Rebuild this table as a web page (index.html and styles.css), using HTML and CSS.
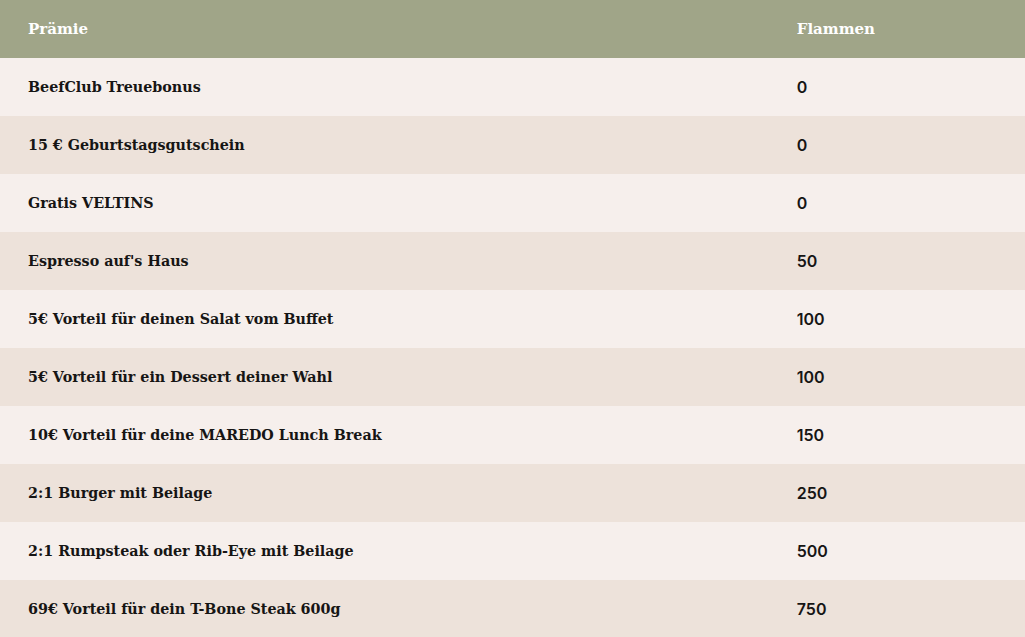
FILE: index.html
```html
<!DOCTYPE html>
<html lang="de">
<head>
<meta charset="utf-8">
<link rel="stylesheet" href="styles.css">
</head>
<body>
<table class="rewards">
  <thead>
    <tr><th class="col-name">Prämie</th><th class="col-points">Flammen</th></tr>
  </thead>
  <tbody>
    <tr><td class="name">BeefClub Treuebonus</td><td class="points">0</td></tr>
    <tr><td class="name">15 € Geburtstagsgutschein</td><td class="points">0</td></tr>
    <tr><td class="name">Gratis VELTINS</td><td class="points">0</td></tr>
    <tr><td class="name">Espresso auf's Haus</td><td class="points">50</td></tr>
    <tr><td class="name">5€ Vorteil für deinen Salat vom Buffet</td><td class="points">100</td></tr>
    <tr><td class="name">5€ Vorteil für ein Dessert deiner Wahl</td><td class="points">100</td></tr>
    <tr><td class="name">10€ Vorteil für deine MAREDO Lunch Break</td><td class="points">150</td></tr>
    <tr><td class="name">2:1 Burger mit Beilage</td><td class="points">250</td></tr>
    <tr><td class="name">2:1 Rumpsteak oder Rib-Eye mit Beilage</td><td class="points">500</td></tr>
    <tr><td class="name">69€ Vorteil für dein T-Bone Steak 600g</td><td class="points">750</td></tr>
  </tbody>
</table>
</body>
</html>
```
FILE: styles.css
```css
html, body {
  margin: 0;
  padding: 0;
  background: #f6efec;
}
.rewards {
  width: 100%;
  border-collapse: collapse;
  table-layout: fixed;
}
.rewards th,
.rewards td {
  height: 58px;
  padding: 0 28px;
  text-align: left;
  vertical-align: middle;
  box-sizing: border-box;
}
.col-name { width: 75%; }
.col-points { width: 25%; }
.rewards thead tr {
  background: #a0a588;
}
.rewards th {
  color: #ffffff;
  font-family: "DejaVu Serif", serif;
  font-weight: bold;
  font-size: 15px;
}
.rewards tbody tr:nth-child(odd) { background: #f6efec; }
.rewards tbody tr:nth-child(even) { background: #ede2da; }
.name {
  color: #161514;
  font-family: "DejaVu Serif", serif;
  font-weight: bold;
  font-size: 14.3px;
}
.points {
  color: #161514;
  font-family: Inter, sans-serif;
  font-weight: 600;
  font-size: 16px;
}
```
